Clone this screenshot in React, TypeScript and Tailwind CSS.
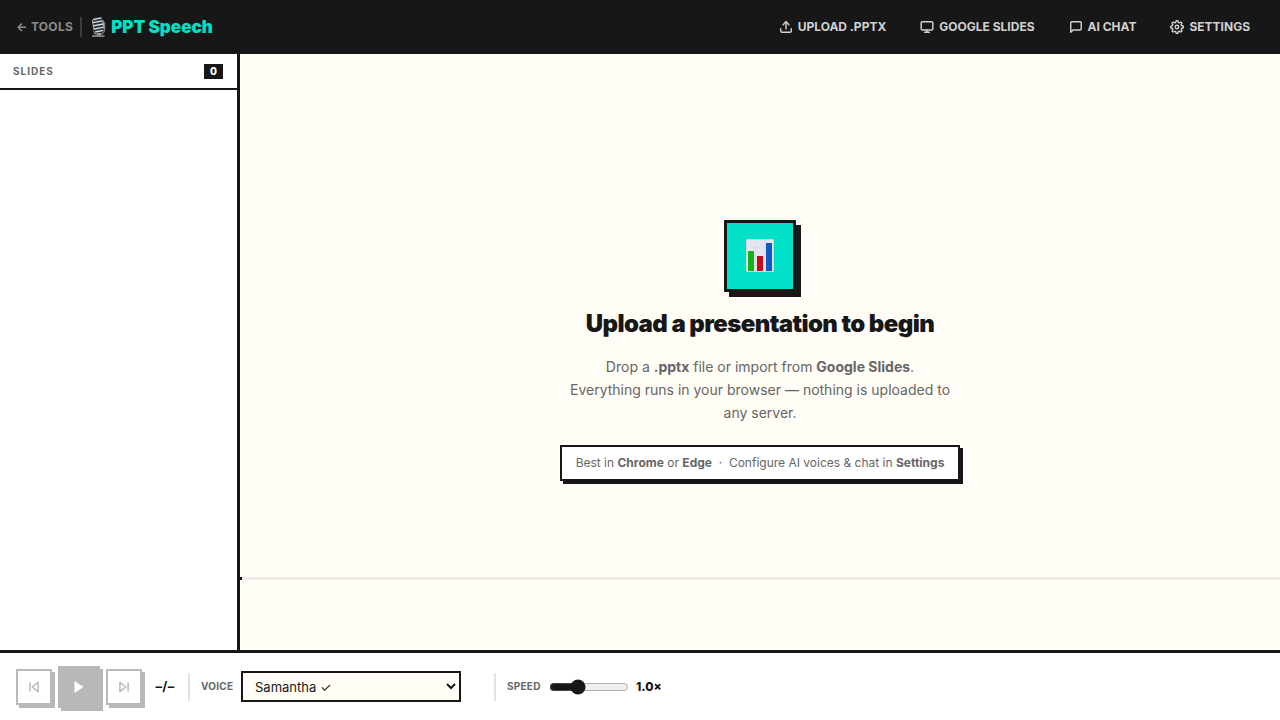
import React, { useState } from 'react';
import { FiMessageSquare, FiMonitor, FiSettings, FiSkipBack, FiSkipForward, FiUpload } from 'react-icons/fi';

interface Voice {
  id: string;
  label: string;
}

const voices: Voice[] = [{ id: 'samantha', label: 'Samantha ✓' }];

const actions = [
  { label: 'Upload .pptx', Icon: FiUpload },
  { label: 'Google Slides', Icon: FiMonitor },
  { label: 'AI Chat', Icon: FiMessageSquare },
  { label: 'Settings', Icon: FiSettings }
];

function MicIcon() {
  return (
    <svg viewBox="0 0 18 22" className="w-[18px] h-[22px]" aria-hidden="true">
      <path d="M3.5 15 5 18h7l2.5-3V6" fill="none" stroke="#77787a" strokeWidth="1.4" />
      <path d="M7 17h4v3H7z" fill="#9a9b9d" />
      <path d="M2 19.3h12.5V21H2z" fill="#858688" />
      <path d="M2 4.2C2.2 2 4.300.9 7.500.9s5 1.400 5.400 3l1.300 9.200c.3 2.400-1.600 3.900-4.800 3.900-3.400 0-5.200-1.400-5.400-3.600z" fill="#2c3136" />
      <path d="M3 3.600 11.500 1.800M2.800 6.700l9.800-1.900M3.300 9.900l9.900-1.900M3.900 13.100l9.800-1.900M5.200 16l8-1.700" stroke="#d4e3ec" strokeWidth="1.3" />
      <path d="M2.300 4.200 4 14M12.900 4l1.200 9" stroke="#b4bbbf" strokeWidth="1" />
    </svg>
  );
}

function ChartIcon() {
  return (
    <svg viewBox="0 0 28 33" className="w-7 h-[33px]" aria-hidden="true">
      <rect width="28" height="33" rx="1" fill="#cdd3e0" />
      <rect x="1" y="1" width="26" height="31" fill="#e3e6f1" />
      <path d="M1 8.5h26M1 16.5h26M1 24.5h26M9.5 1v31M18.5 1v31" stroke="#dadeea" strokeWidth="1" />
      <rect x="2" y="12" width="6" height="20" fill="#16b316" />
      <rect x="11" y="17" width="6" height="15" fill="#c40d17" />
      <rect x="20" y="4" width="6" height="28" fill="#1259c4" />
    </svg>
  );
}

export default function App() {
  const [voice, setVoice] = useState('samantha');
  const [speed, setSpeed] = useState(1);

  return (
    <div className="min-h-screen flex flex-col bg-[#fffdf5] text-[#171717] font-['Inter',sans-serif]">
      {/* Header */}
      <header className="min-h-[54px] px-4 flex items-center justify-between bg-[#171717]">
        <div className="flex items-center">
          <a href="#tools" className="pr-[7px] text-xs leading-5 font-bold tracking-wide text-[#8b8b8b] border-r-2 border-[#3d3d3d]">
            ← TOOLS
          </a>
          <h1 className="ml-2 flex items-center gap-[3px] text-[17px] leading-6 font-black text-[#00e0c6]">
            <MicIcon />
            PPT Speech
          </h1>
        </div>
        <nav className="flex items-center gap-[6px]">
          {actions.map(({ label, Icon }) => (
            <button key={label} className="px-[14px] py-2 flex items-center gap-[5px] text-xs font-bold uppercase text-[#d1d1d1]">
              <Icon className="w-[14px] h-[14px]" strokeWidth={2.5} />
              {label}
            </button>
          ))}
        </nav>
      </header>

      <div className="flex-1 flex">
        {/* Slide list */}
        <aside className="w-60 shrink-0 bg-white border-r-3 border-[#171717]">
          <div className="h-9 pl-[13px] pr-[14px] flex items-center justify-between border-b-2 border-[#171717]">
            <h2 className="text-[10px] font-bold uppercase tracking-widest text-[#666]">Slides</h2>
            <span className="px-[6px] bg-[#171717] text-white text-[10px] leading-[15px] font-extrabold">0</span>
          </div>
        </aside>

        {/* Stage */}
        <main className="flex-1 grid grid-rows-[1fr_auto_auto]">
          <section className="pb-1 col-start-1 row-start-1 row-span-3 flex flex-col items-center justify-center text-center">
            <div className="w-[72px] h-[72px] flex items-center justify-center bg-[#00e0c6] border-3 border-[#171717] shadow-[5px_5px_0_#171717]">
              <ChartIcon />
            </div>
            <h2 className="mt-4 text-[24px] leading-8 font-black tracking-tight">Upload a presentation to begin</h2>
            <p className="mt-[15px] max-w-[400px] text-sm leading-[23px] text-[#666]">
              Drop a <b>.pptx</b> file or import from <b>Google Slides</b>.<br />
              Everything runs in your browser — nothing is uploaded to any server.
            </p>
            <div className="mt-[21px] px-[14px] py-2 bg-white border-2 border-[#171717] shadow-[3px_3px_0_#171717] text-xs text-[#666]">
              Best in <b>Chrome</b> or <b>Edge</b> &nbsp;·&nbsp; Configure AI voices &amp; chat in <b>Settings</b>
            </div>
          </section>
          <div className="col-start-1 row-start-2 h-[3px] bg-[#ecebe6]">
            <div className="w-[2px] h-full bg-[#171717]" />
          </div>
          <div className="col-start-1 row-start-3 h-[70px]" />
        </main>
      </div>

      {/* Playback controls */}
      <footer className="min-h-[70px] px-4 flex items-center bg-white border-t-3 border-[#171717]">
        <div className="flex items-center gap-[6px]">
          <button disabled aria-label="Previous slide" className="w-9 h-9 flex items-center justify-center bg-white border-2 border-[#171717] shadow-[3px_3px_0_#171717] opacity-30">
            <FiSkipBack className="w-[14px] h-[14px]" strokeWidth={2.5} />
          </button>
          <button disabled aria-label="Play" className="w-[42px] h-[42px] flex items-center justify-center bg-[#171717] text-white shadow-[3px_3px_0_#171717] opacity-30">
            <svg viewBox="0 0 10 12" className="w-[10px] h-3" fill="currentColor">
              <path d="M.5 0 9.5 6l-9 6z" />
            </svg>
          </button>
          <button disabled aria-label="Next slide" className="w-9 h-9 flex items-center justify-center bg-white border-2 border-[#171717] shadow-[3px_3px_0_#171717] opacity-30">
            <FiSkipForward className="w-[14px] h-[14px]" strokeWidth={2.5} />
          </button>
        </div>
        <span className="w-[46px] text-center text-[13px] font-bold tracking-wide">–/–</span>
        <div className="w-[2px] h-7 bg-[#e2e2e2]" />
        <label htmlFor="voice" className="ml-[11px] w-10 text-[10px] font-bold tracking-wide text-[#666]">VOICE</label>
        <select
          id="voice"
          value={voice}
          onChange={(e) => setVoice(e.target.value)}
          className="w-[220px] h-[31px] px-2 bg-[#fffdf5] border-2 border-[#171717] text-[13px]"
        >
          {voices.map((v) => (
            <option key={v.id} value={v.id}>{v.label}</option>
          ))}
        </select>
        <div className="ml-[33px] w-[2px] h-7 bg-[#e2e2e2]" />
        <label htmlFor="speed" className="ml-[11px] w-[42px] text-[10px] font-bold tracking-wide text-[#666]">SPEED</label>
        <input
          id="speed"
          type="range"
          min="0.5"
          max="2"
          step="0.1"
          value={speed}
          onChange={(e) => setSpeed(Number(e.target.value))}
          className="w-20 accent-[#171717]"
        />
        <span className="ml-[7px] text-xs font-extrabold">{speed.toFixed(1)}×</span>
      </footer>
    </div>
  );
}
